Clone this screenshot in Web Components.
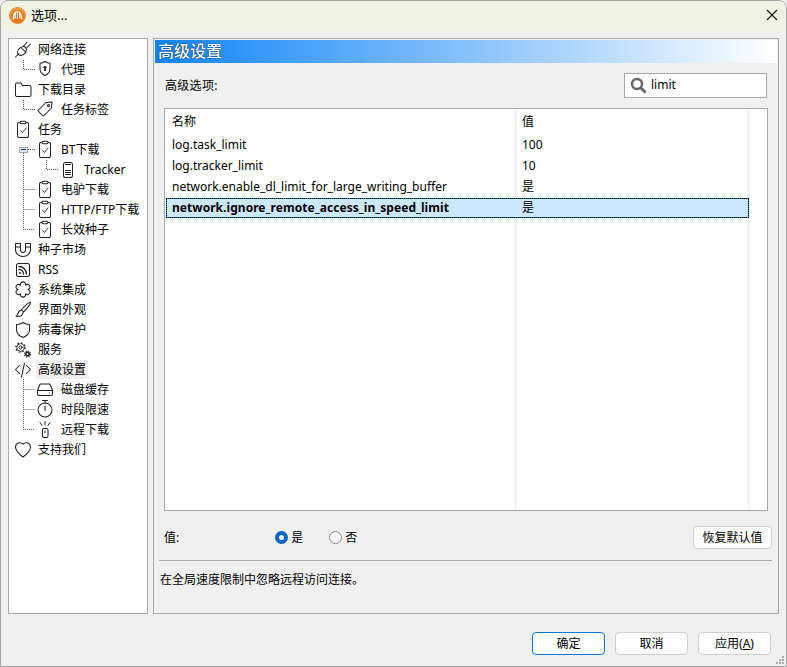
<!DOCTYPE html>
<html lang="zh">
<head>
<meta charset="utf-8">
<title>选项</title>
<style>
    html, body { margin: 0; padding: 0; height: 667px; overflow: hidden; background: #f0f0f0; }
    body { font: 12px/18px "Noto Sans", "Noto Sans CJK SC", sans-serif; color: #000; }
</style>
</head>
<body>
<opt-dialog>
    <title-bar slot="title">选项...</title-bar>
    <tree-nav slot="tree">
        <tree-row level="0" icon="plug">网络连接</tree-row>
        <tree-row level="1" icon="shieldkey" lines="M14.5 1V10.500H26">代理</tree-row>
        <tree-row level="0" icon="folder">下载目录</tree-row>
        <tree-row level="1" icon="tag" lines="M14.5 1V10.500H26">任务标签</tree-row>
        <tree-row level="0" icon="clip">任务</tree-row>
        <tree-row level="1" icon="clip" lines="M14.5 14V20M19 10.500H26" box="1">BT下载</tree-row>
        <tree-row level="2" icon="doc" lines="M14.5 0V20M37.5 1V10.500H49">Tracker</tree-row>
        <tree-row level="1" icon="clip" lines="M14.5 0V20M14.5 10.500H26">电驴下载</tree-row>
        <tree-row level="1" icon="clip" lines="M14.5 0V20M14.5 10.500H26">HTTP/FTP下载</tree-row>
        <tree-row level="1" icon="clip" lines="M14.5 0V10.500H26">长效种子</tree-row>
        <tree-row level="0" icon="magnet">种子市场</tree-row>
        <tree-row level="0" icon="rss">RSS</tree-row>
        <tree-row level="0" icon="puzzle">系统集成</tree-row>
        <tree-row level="0" icon="brush">界面外观</tree-row>
        <tree-row level="0" icon="shield">病毒保护</tree-row>
        <tree-row level="0" icon="gears">服务</tree-row>
        <tree-row level="0" icon="code" active>高级设置</tree-row>
        <tree-row level="1" icon="disk" lines="M14.5 0V20M14.5 10.500H26">磁盘缓存</tree-row>
        <tree-row level="1" icon="timer" lines="M14.5 0V20M14.5 10.500H26">时段限速</tree-row>
        <tree-row level="1" icon="remote" lines="M14.5 0V10.500H26">远程下载</tree-row>
        <tree-row level="0" icon="heart">支持我们</tree-row>
    </tree-nav>
    <settings-panel slot="panel" heading="高级设置">
        <span slot="label">高级选项:</span>
        <search-box slot="search">limit</search-box>
        <adv-list slot="list">
            <adv-row head name="名称" value="值"></adv-row>
            <adv-row name="log.task_limit" value="100"></adv-row>
            <adv-row name="log.tracker_limit" value="10"></adv-row>
            <adv-row name="network.enable_dl_limit_for_large_writing_buffer" value="是"></adv-row>
            <adv-row selected name="network.ignore_remote_access_in_speed_limit" value="是"></adv-row>
        </adv-list>
        <value-row slot="value">
            <radio-opt checked>是</radio-opt>
            <radio-opt>否</radio-opt>
            <win-button slot="action" width="79">恢复默认值</win-button>
        </value-row>
        <span slot="desc">在全局速度限制中忽略远程访问连接。</span>
    </settings-panel>
    <win-button slot="foot" primary>确定</win-button>
    <win-button slot="foot">取消</win-button>
    <win-button slot="foot">应用(<u>A</u>)</win-button>
</opt-dialog>

<script>
const ICONS = {
    plug: `<path d="M2.500 18l3.500-3.500M8 8.500l5 5M10.500 7L14 3.500M13 9.500L17.500 5"/><ellipse cx="9" cy="12" rx="5" ry="3.600" transform="rotate(-45 9 12)"/>`,
    shieldkey: `<path d="M10 2.500c1.500 1.200 3.200 1.700 5 1.800v5.200c0 3.500-2.200 5.800-5 7-2.800-1.200-5-3.500-5-7V4.300c1.800-.1 3.500-.6 5-1.800z"/><path fill="#222" stroke="none" d="M10 7a1.500 1.500 0 0 1 .8 2.800V12H9.200V9.800A1.500 1.500 0 0 1 10 7z"/>`,
    folder: `<path d="M2.500 5.500a1.500 1.500 0 0 1 1.500-1.500h4l1.500 2.500h7a1.500 1.500 0 0 1 1.500 1.500v8a1.500 1.500 0 0 1-1.500 1.500H4a1.500 1.500 0 0 1-1.500-1.500z"/>`,
    tag: `<path d="M3.500 11l7.500-7.500 6-.5-.5 6-7.500 7.500a1 1 0 0 1-1.400 0L3.500 12.400a1 1 0 0 1 0-1.400z"/><circle cx="13.500" cy="6.500" r="1"/>`,
    clip: `<path d="M7 3.500H6a1.500 1.500 0 0 0-1.500 1.500v12A1.500 1.500 0 0 0 6 18.500h8a1.500 1.500 0 0 0 1.500-1.500V5A1.500 1.500 0 0 0 14 3.500h-1M7 3.500a1.200 1.200 0 0 1 1.200-1.200h3.600A1.200 1.200 0 0 1 13 3.500 1.200 1.200 0 0 1 11.800 4.700H8.200A1.200 1.200 0 0 1 7 3.500z"/><path stroke-width=".9" d="M7.500 11.500l2 2 3.500-4.500"/>`,
    doc: `<rect x="5.500" y="3.500" width="9" height="15" rx="2"/><path stroke-width="1" d="M7.500 5.500h5M7.500 11.500h5M7.500 13.500h5M7.500 15.500h5"/>`,
    magnet: `<path d="M2.500 4.500h5v6.500a2.500 2.500 0 0 0 5 0V4.500h5v6.500a7.500 6.500 0 0 1-15 0z"/><path d="M2.500 8h5M12.500 8h5"/>`,
    rss: `<rect x="3.500" y="4.500" width="13" height="13" rx="2"/><circle cx="7" cy="14" r="1" fill="#222" stroke="none"/><path stroke-width="1.300" d="M6 10.500a4.500 4.500 0 0 1 4.500 4.500M6 7.500a7.500 7.500 0 0 1 7.500 7.500"/>`,
    puzzle: `<path d="M7.500 6.200A2.600 2.600 0 1 1 12.500 6.200 2.600 2.600 0 1 1 15 10.500 2.600 2.600 0 1 1 12.500 14.800 2.600 2.600 0 1 1 7.500 14.800 2.600 2.600 0 1 1 5 10.500 2.600 2.600 0 1 1 7.500 6.200z"/>`,
    brush: `<path d="M17.500 3c-.8-.6-6.500 4.500-9 8l2 2c3-2.500 7.700-9.300 7-10z"/><path d="M8.500 11c-2 .3-3 1.500-3.500 3.500-.2 1-.8 1.800-2 2.500 2.500.6 5.500.3 6.500-1.800.5-1 .5-1.700.5-2.200"/>`,
    shield: `<path d="M10 3.500c2 1.500 4.300 2 6.500 2.100v5.400c0 3.800-3 6-6.500 7.500-3.500-1.500-6.500-3.700-6.500-7.500V5.600C5.700 5.500 8 5 10 3.500z"/>`,
    gears: `<circle cx="7.500" cy="8.500" r="1.600" stroke-width="1"/><circle cx="7.500" cy="8.500" r="3.800" stroke-width=".9"/><circle cx="7.500" cy="8.500" r="4.700" stroke-dasharray="1.500 2.190" stroke-width="1.300" stroke-linecap="butt"/><circle cx="14.500" cy="15" r="1.700" stroke-width="1.600"/><circle cx="14.500" cy="15" r="3" stroke-dasharray="1.200 1.160" stroke-width="1.200" stroke-linecap="butt"/>`,
    code: `<path d="M6.500 6.500l-4 4 4 4M13.500 6.500l4 4-4 4M11.500 4l-3 14"/>`,
    disk: `<path d="M6 5h8a1.500 1.500 0 0 1 1.400 1l2.100 5.500v3.500a1.500 1.500 0 0 1-1.500 1.500H4a1.500 1.500 0 0 1-1.500-1.500v-3.500L4.600 6A1.500 1.500 0 0 1 6 5zM2.500 11.500h15"/><circle cx="14.300" cy="14" r=".6" fill="#222" stroke="none"/>`,
    timer: `<circle cx="10" cy="11" r="7"/><path d="M7.500 1.500h5M10 1.500V4M10 7v4.500"/>`,
    remote: `<rect x="7.500" y="9.500" width="5.500" height="9" rx="1.500"/><path stroke-width="1" d="M10 12v2M10 2.500v3.500M5 3.500l2 3M15 3.500l-2 3"/>`,
    heart: `<path d="M10 18C6 15 2.500 12 2.500 8a4.300 4.300 0 0 1 7.500-2.800A4.300 4.300 0 0 1 17.500 8c0 4-3.500 7-7.500 10z"/>`
}

window.customElements.define('opt-dialog',
    class extends HTMLElement {
        template() {
            return `
            <style>
                :host{
                    display:flex;
                    flex-direction:column;
                    box-sizing:border-box;
                    width:787px;
                    height:667px;
                    position:relative;
                    border:1px solid #a4a4a4;
                    border-top-left-radius:8px;
                    border-top-right-radius:8px;
                    background:#f0f0f0;
                    overflow:hidden;
                }
                .body{
                    display:flex;
                    gap:5px;
                    flex:1;
                    min-height:0;
                    padding:7px 7px 0 7px;
                }
                .foot{
                    display:flex;
                    justify-content:flex-end;
                    gap:10px;
                    height:34px;
                    padding:18px 15px 0 0;
                }
                .grip{
                    position:absolute;
                    right:1px;
                    bottom:1px;
                }
            </style>
            <slot name="title"></slot>
            <div class="body">
                <slot name="tree"></slot>
                <slot name="panel"></slot>
            </div>
            <div class="foot"><slot name="foot"></slot></div>
            <svg class="grip" width="10" height="10" fill="#a8a8a8">
                <rect x="7" y="1" width="2" height="2"/>
                <rect x="4" y="4" width="2" height="2"/><rect x="7" y="4" width="2" height="2"/>
                <rect x="1" y="7" width="2" height="2"/><rect x="4" y="7" width="2" height="2"/><rect x="7" y="7" width="2" height="2"/>
            </svg>
            `
        }
        constructor() {
            super()
            this.attachShadow({ mode: "open" })
            this.shadowRoot.innerHTML = this.template()
        }
    }
)

window.customElements.define('title-bar',
    class extends HTMLElement {
        template() {
            return `
            <style>
                :host{
                    display:flex;
                    align-items:center;
                    box-sizing:border-box;
                    height:30px;
                    padding:0 0 2px 8px;
                    background:#f0f3e4;
                    font-size:13px;
                }
                .text{ margin-left:5px; margin-top:-1px; flex:1; }
                .close{ margin-right:8px; }
            </style>
            <svg width="17" height="17" viewBox="0 0 17 17">
                <defs><radialGradient id="g" cx=".5" cy=".55" r=".55"><stop offset="0" stop-color="#e8640c"/><stop offset=".7" stop-color="#ee7a18"/><stop offset="1" stop-color="#ffc46a"/></radialGradient></defs>
                <circle cx="8.500" cy="8.500" r="8" fill="url(#g)" stroke="#d2751f" stroke-width=".8"/>
                <path d="M4.300 12.500C4.300 7.500 5.500 4.500 8.500 4.500s4.200 3 4.200 8M8.500 4.500v7.500M6.500 5.500c-.3 2-.4 4-.4 6M10.500 5.500c.3 2 .4 4 .4 6" fill="none" stroke="#fff" stroke-width="1.200"/>
            </svg>
            <span class="text"><slot></slot></span>
            <svg class="close" width="12" height="12" stroke="#111" stroke-width="1.100"><path d="M1 1l10 10M11 1L1 11"/></svg>
            `
        }
        constructor() {
            super()
            this.attachShadow({ mode: "open" })
            this.shadowRoot.innerHTML = this.template()
        }
    }
)

window.customElements.define('tree-nav',
    class extends HTMLElement {
        template() {
            return `
            <style>
                :host{
                    display:block;
                    box-sizing:border-box;
                    width:140px;
                    height:100%;
                    border:1px solid #a9a9a9;
                    background:#fff;
                }
            </style>
            <slot></slot>
            `
        }
        constructor() {
            super()
            this.attachShadow({ mode: "open" })
            this.shadowRoot.innerHTML = this.template()
        }
    }
)

window.customElements.define('tree-row',
    class extends HTMLElement {
        template(level, icon, lines, box) {
            const guide = [4, 26, 49][level]
            const gap = level == 0 ? 3 : 4
            return `
            <style>
                :host{
                    display:flex;
                    align-items:center;
                    height:20px;
                    white-space:nowrap;
                }
                svg{ display:block; flex:none; }
                .icon{ fill:none; stroke:#222; stroke-width:1.050; stroke-linejoin:round; stroke-linecap:round; }
                .label{ margin-left:${gap}px; padding:0 2px; line-height:19px; height:19px; }
                :host([active]) .label{ background:#eeeeee; }
            </style>
            <svg width="${guide}" height="20">
                <path d="${lines}" fill="none" stroke="#555" stroke-dasharray="1 1"/>
                ${box ? `<rect x="10.500" y="8.500" width="8" height="5" fill="#dfe6f0" stroke="#9aa7bb"/><path d="M12 10.500h5" stroke="#234"/>` : ''}
            </svg>
            <svg class="icon" width="20" height="20" viewBox="0 0 20 20">${ICONS[icon]}</svg>
            <span class="label"><slot></slot></span>
            `
        }
        connectedCallback() {
            this.shadowRoot.innerHTML = this.template(
                this.getAttribute('level'),
                this.getAttribute('icon'),
                this.getAttribute('lines') || '',
                this.hasAttribute('box')
            )
        }
        constructor() {
            super()
            this.attachShadow({ mode: "open" })
        }
    }
)

window.customElements.define('settings-panel',
    class extends HTMLElement {
        template() {
            return `
            <style>
                :host{
                    display:flex;
                    flex-direction:column;
                    box-sizing:border-box;
                    width:626px;
                    height:100%;
                    padding:1px;
                    border:1px solid #a9a9a9;
                }
                .band{
                    height:23px;
                    flex:none;
                    padding-left:3px;
                    background:linear-gradient(to right,#0f84f7,#ffffff);
                    color:#fff;
                    font-size:16px;
                    line-height:23px;
                    font-weight:500;
                    text-shadow:0 0 1px #024,0 0 1px #024;
                }
                .content{
                    display:flex;
                    flex-direction:column;
                    flex:1;
                    min-height:0;
                    padding:0 4px;
                }
                .tools{
                    display:flex;
                    justify-content:space-between;
                    align-items:center;
                    height:25px;
                    margin:10px 6px 10px 6px;
                }
                .tools ::slotted(span){ letter-spacing:.3px; }
                .list{ display:flex; height:403px; margin:0 5px; }
                .list ::slotted(*){ flex:1; }
                .line{ height:1px; margin:11px 1px 0 0; background:#a9a9a9; }
                .desc{ margin:10px 0 0 1px; line-height:18px; }
            </style>
            <div class="band"></div>
            <div class="content">
                <div class="tools"><slot name="label"></slot><slot name="search"></slot></div>
                <div class="list"><slot name="list"></slot></div>
                <slot name="value"></slot>
                <div class="line"></div>
                <div class="desc"><slot name="desc"></slot></div>
            </div>
            `
        }
        connectedCallback() {
            this.shadowRoot.querySelector('.band').textContent = this.getAttribute('heading')
        }
        constructor() {
            super()
            this.attachShadow({ mode: "open" })
            this.shadowRoot.innerHTML = this.template()
        }
    }
)

window.customElements.define('search-box',
    class extends HTMLElement {
        template() {
            return `
            <style>
                :host{
                    display:flex;
                    align-items:center;
                    box-sizing:border-box;
                    width:143px;
                    height:25px;
                    padding-left:5px;
                    border:1px solid #a9a9a9;
                    background:#fff;
                    font-size:12px;
                }
                svg{ margin-right:4px; }
                span{ margin-top:-1px; }
            </style>
            <svg width="17" height="17" fill="none" stroke="#666" stroke-width="2.400"><circle cx="7" cy="7" r="5"/><path d="M10.500 10.500l5 5" stroke-width="2.800"/></svg>
            <span><slot></slot></span>
            `
        }
        constructor() {
            super()
            this.attachShadow({ mode: "open" })
            this.shadowRoot.innerHTML = this.template()
        }
    }
)

window.customElements.define('adv-list',
    class extends HTMLElement {
        template() {
            return `
            <style>
                :host{
                    display:flex;
                    flex-direction:column;
                    box-sizing:border-box;
                    border:1px solid #a9a9a9;
                    background:#fff;
                }
                .rest{
                    flex:1;
                    display:grid;
                    grid-template-columns:351px 233px;
                }
                .rest div{ border-right:1px solid #e6eefa; }
            </style>
            <slot></slot>
            <div class="rest"><div></div><div></div></div>
            `
        }
        constructor() {
            super()
            this.attachShadow({ mode: "open" })
            this.shadowRoot.innerHTML = this.template()
        }
    }
)

window.customElements.define('adv-row',
    class extends HTMLElement {
        template(name, value) {
            return `
            <style>
                :host{
                    display:grid;
                    grid-template-columns:351px 233px;
                    height:21px;
                    line-height:20px;
                }
                :host([head]){ height:26px; line-height:26px; }
                div{
                    box-sizing:border-box;
                    padding-left:7px;
                    border-right:1px solid #e6eefa;
                    white-space:nowrap;
                }
                div + div{ padding-left:6px; }
                :host([selected]) .wrap{
                    grid-column:1 / 3;
                    display:grid;
                    grid-template-columns:350px 233px;
                    margin-left:1px;
                    height:20px;
                    box-sizing:border-box;
                    border:1px solid #0078d4;
                    outline:1px dotted #000;
                    outline-offset:-1px;
                    background:#cce8ff;
                }
                .wrap{ display:contents; }
                :host([selected]) div{ border:0; padding-left:5px; line-height:18px; }
                :host([selected]) div + div{ padding-left:5px; }
                :host([selected]) .name{ font-weight:700; letter-spacing:.05px; }
            </style>
            <section class="wrap">
                <div class="name">${name}</div>
                <div class="val">${value}</div>
            </section>
            `
        }
        connectedCallback() {
            this.shadowRoot.innerHTML = this.template(this.getAttribute('name'), this.getAttribute('value'))
        }
        constructor() {
            super()
            this.attachShadow({ mode: "open" })
        }
    }
)

window.customElements.define('value-row',
    class extends HTMLElement {
        template() {
            return `
            <style>
                :host{
                    display:flex;
                    align-items:center;
                    height:23px;
                    margin-top:15px;
                    padding:0 1px 0 5px;
                }
                .radios{ display:flex; gap:26px; margin-left:96px; flex:1; }
            </style>
            <span>值:</span>
            <div class="radios"><slot></slot></div>
            <slot name="action"></slot>
            `
        }
        constructor() {
            super()
            this.attachShadow({ mode: "open" })
            this.shadowRoot.innerHTML = this.template()
        }
    }
)

window.customElements.define('radio-opt',
    class extends HTMLElement {
        template() {
            return `
            <style>
                :host{ display:inline-flex; align-items:center; gap:3px; }
                i{
                    box-sizing:border-box;
                    display:block;
                    width:13px;
                    height:13px;
                    border-radius:50%;
                    border:1px solid #858585;
                    background:#fff;
                }
                :host([checked]) i{ border:4px solid #0067c0; }
            </style>
            <i></i><span><slot></slot></span>
            `
        }
        constructor() {
            super()
            this.attachShadow({ mode: "open" })
            this.shadowRoot.innerHTML = this.template()
        }
    }
)

window.customElements.define('win-button',
    class extends HTMLElement {
        template(width) {
            return `
            <style>
                :host{
                    display:flex;
                    align-items:center;
                    justify-content:center;
                    box-sizing:border-box;
                    width:${width}px;
                    height:23px;
                    border:1px solid #d0d0d0;
                    border-radius:4px;
                    background:#fdfdfd;
                    white-space:nowrap;
                }
                :host([primary]){ border-color:#0078d4; }
            </style>
            <slot></slot>
            `
        }
        connectedCallback() {
            this.shadowRoot.innerHTML = this.template(this.getAttribute('width') || 73)
        }
        constructor() {
            super()
            this.attachShadow({ mode: "open" })
        }
    }
)
</script>
</body>
</html>
